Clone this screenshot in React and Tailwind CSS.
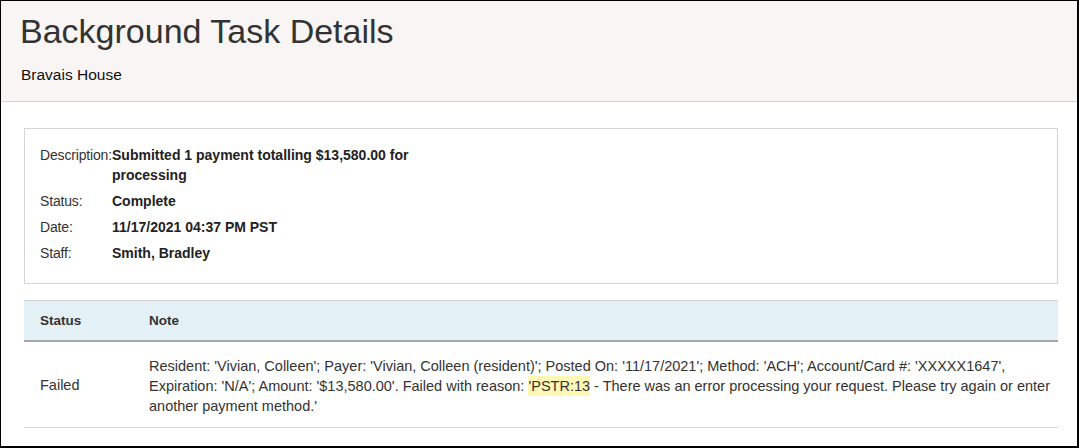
export default function App() {
  const details = [
    { label: 'Description:', value: 'Submitted 1 payment totalling $13,580.00 for processing' },
    { label: 'Status:', value: 'Complete' },
    { label: 'Date:', value: '11/17/2021 04:37 PM PST' },
    { label: 'Staff:', value: 'Smith, Bradley' },
  ];

  return (
    <div
      className="w-[1079px] h-[448px] bg-white border-l border-t border-r-2 border-b-2 border-black overflow-hidden text-[#333]"
      style={{ fontFamily: '"Liberation Sans", Arial, sans-serif' }}
    >
      <div className="bg-[#f9f5f4] border-b border-[#d6d6d6] pl-[19px] pt-[12px] pb-[16px]">
        <h1 className="text-[34px] leading-[37px] text-[#333]">Background Task Details</h1>
        <div className="mt-[15px] pl-[1px] text-[15.5px] leading-[20px] text-[#111]">Bravais House</div>
      </div>

      <div className="pl-[23px] pr-[19px] pt-[26px]">
        <div className="border border-[#d4d4d4] pl-[15px] pt-[13px] pb-[17px]">
          <table className="text-[14px] leading-[20px] border-collapse">
            <tbody>
              {details.map(d => (
                <tr key={d.label}>
                  <td className="w-[72px] max-w-[72px] align-top py-[3px] p-0 whitespace-nowrap tracking-[-0.17px] text-[#333]">{d.label}</td>
                  <td className="w-[300px] align-top py-[3px] font-bold text-[#222]">{d.value}</td>
                </tr>
              ))}
            </tbody>
          </table>
        </div>

        <table className="mt-[16px] w-full text-[14.5px] leading-[20px] border-collapse">
          <thead>
            <tr className="bg-[#e3f0f5] border-t border-[#d4d4d4] border-b-2 border-b-[#a6a6a6]">
              <th className="w-[125px] h-[40px] text-left pl-[16px] pt-[2px] text-[13.5px] font-bold text-[#333]">Status</th>
              <th className="text-left pt-[2px] text-[13.5px] font-bold text-[#333]">Note</th>
            </tr>
          </thead>
          <tbody>
            <tr className="border-b border-[#d8d8d8]">
              <td className="pl-[16px] pt-[2px] align-middle">Failed</td>
              <td className="pt-[14px] pb-[11px] pr-[2px]">
                Resident: 'Vivian, Colleen'; Payer: 'Vivian, Colleen (resident)'; Posted On: '11/17/2021'; Method: 'ACH'; Account/Card #: 'XXXXX1647', Expiration: 'N/A'; Amount: '$13,580.00'. Failed with reason:{' '}
                <span className="bg-[#fff7b5] py-[2px]">'PSTR:13</span> - There was an error processing your request. Please try again or enter another payment method.'
              </td>
            </tr>
          </tbody>
        </table>
      </div>
    </div>
  );
}
